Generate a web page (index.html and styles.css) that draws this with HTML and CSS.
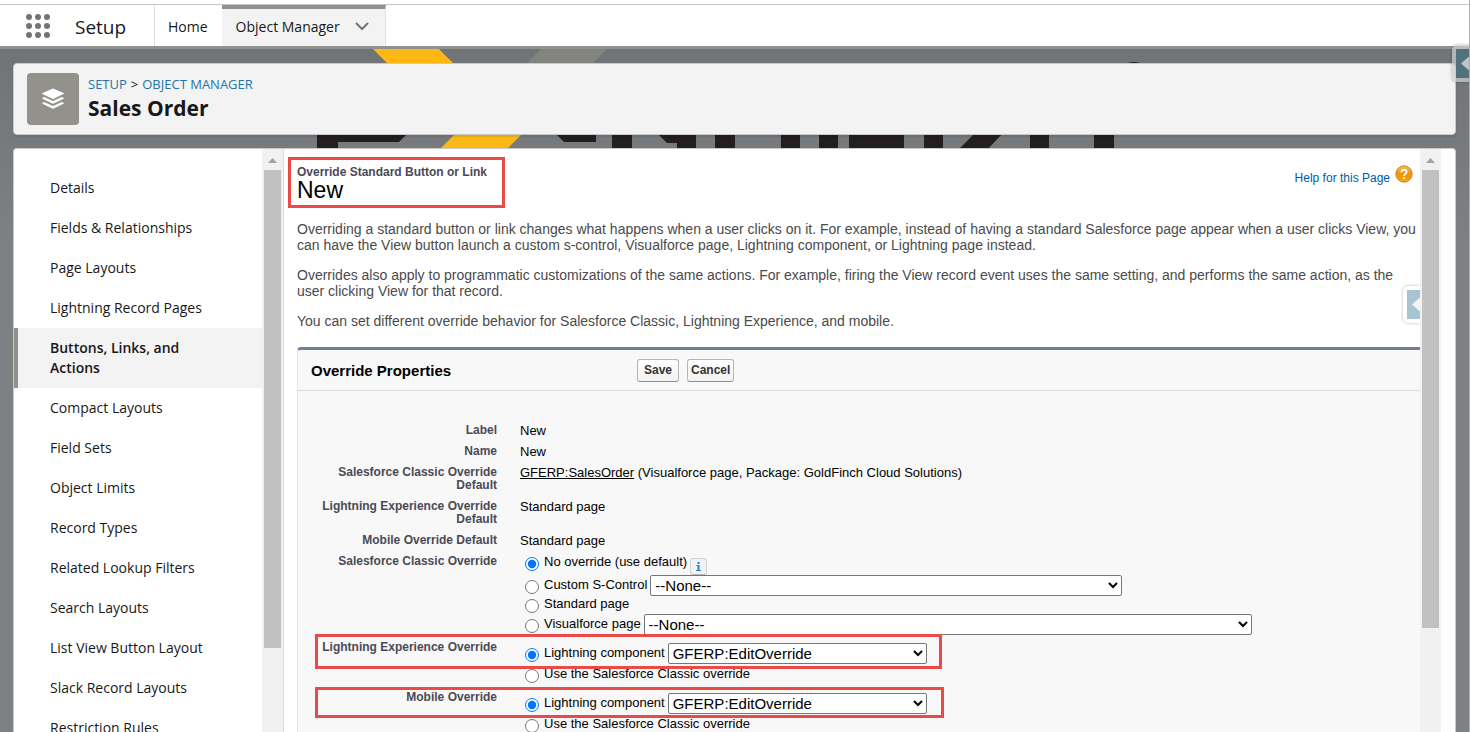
FILE: index.html
```html
<!DOCTYPE html>
<html lang="en">
<head>
<meta charset="utf-8">
<title>Sales Order | Object Manager</title>
<link rel="stylesheet" href="styles.css">
</head>
<body>
<div class="page">
  <header class="topbar">
    <button class="launcher" type="button" aria-label="App Launcher">
      <svg width="24" height="24" viewBox="0 0 24 24" fill="#747474"><circle cx="3" cy="3" r="3"/><circle cx="12" cy="3" r="3"/><circle cx="21" cy="3" r="3"/><circle cx="3" cy="12" r="3"/><circle cx="12" cy="12" r="3"/><circle cx="21" cy="12" r="3"/><circle cx="3" cy="21" r="3"/><circle cx="12" cy="21" r="3"/><circle cx="21" cy="21" r="3"/></svg>
    </button>
    <span class="app-name">Setup</span>
    <nav class="tabs">
      <a class="tab" href="#">Home</a>
      <a class="tab tab-active" href="#">Object Manager
        <svg width="14" height="9" viewBox="0 0 14 9" fill="none" stroke="#747474" stroke-width="2" stroke-linecap="round" stroke-linejoin="round"><path d="M1.500 1.500 7 7l5.500-5.500"/></svg>
      </a>
    </nav>
  </header>

  <div class="stage">
    <svg class="backdrop" width="1200" height="120" viewBox="0 49 1200 120" aria-hidden="true">
      <path fill="#fdb813" d="M373 49h66l15 15h-66zM454 135h67l-14 14h-67z"/>
      <path fill="#828480" d="M541 49h66l-14 14h-66z"/>
      <path fill="#231f20" d="M317 134h90l-8 8h-61v7h-21zM556 134h40v8h-32zM612 134h20v15h-20zM658 134h38v15h-19v-6h-10zM715 134h20v15h-20zM781 134h19v15h-19zM819 134h19v15h-19zM849 134h55v15h-55zM924 134h19v15h-19zM974 134h28l-14 15h-29zM1030 134h19v15h-19zM1094 134h20v15h-20z"/>
      <ellipse fill="#231f20" cx="1134" cy="69" rx="11" ry="7"/>
    </svg>

    <section class="card object-header">
      <div class="object-icon">
        <svg width="24" height="24" viewBox="0 0 24 24" fill="#fff"><path d="M11.300 1.700 1.500 6.100q-1 .5 0 1l9.800 4.700q.7.300 1.400 0l9.800-4.700q1-.5 0-1l-9.800-4.400q-.7-.3-1.400 0z"/><path d="m1.500 10.800 1.700-.8 7.500 3.600q1.300.6 2.600 0l7.500-3.600 1.700.8q1 .5 0 1l-9.800 4.700q-.7.300-1.400 0l-9.800-4.700q-1-.5 0-1z"/><path d="m1.500 15.800 1.700-.8 7.500 3.600q1.300.6 2.600 0l7.500-3.600 1.700.8q1 .5 0 1l-9.800 4.700q-.7.300-1.400 0l-9.800-4.700q-1-.5 0-1z"/></svg>
      </div>
      <div>
        <div class="crumbs"><a href="#">SETUP</a><span>&gt;</span><a href="#">OBJECT MANAGER</a></div>
        <h1>Sales Order</h1>
      </div>
    </section>

    <section class="card workspace">
      <nav class="sidebar">
        <a href="#">Details</a>
        <a href="#">Fields &amp; Relationships</a>
        <a href="#">Page Layouts</a>
        <a href="#">Lightning Record Pages</a>
        <a class="current" href="#">Buttons, Links, and Actions</a>
        <a href="#">Compact Layouts</a>
        <a href="#">Field Sets</a>
        <a href="#">Object Limits</a>
        <a href="#">Record Types</a>
        <a href="#">Related Lookup Filters</a>
        <a href="#">Search Layouts</a>
        <a href="#">List View Button Layout</a>
        <a href="#">Slack Record Layouts</a>
        <a href="#">Restriction Rules</a>
      </nav>
      <div class="scrollbar side-scroll"><span class="arrow"></span><span class="thumb"></span></div>

      <main class="content">
        <div class="title-row">
          <div class="title-box">
            <div class="eyebrow">Override Standard Button or Link</div>
            <h2>New</h2>
          </div>
          <a class="help" href="#">Help for this Page
            <svg width="18" height="18" viewBox="0 0 18 18"><defs><linearGradient id="amber" x1="0" y1="0" x2="0" y2="1"><stop offset="0" stop-color="#f7bd55"/><stop offset=".5" stop-color="#ee9209"/><stop offset="1" stop-color="#f5a80d"/></linearGradient></defs><circle cx="9" cy="9" r="8.200" fill="url(#amber)" stroke="#c98a2c"/><path d="M6.500 7.200C6.500 3.900 11.700 4 11.600 7c0 1.800-2.500 1.900-2.500 3.900" fill="none" stroke="#fff" stroke-width="1.800"/><circle cx="9.100" cy="13" r="1.100" fill="#fff"/></svg>
          </a>
        </div>

        <div class="intro">
          <p>Overriding a standard button or link changes what happens when a user clicks on it. For example, instead of having a standard Salesforce page appear when a user clicks View, you can have the View button launch a custom s-control, Visualforce page, Lightning component, or Lightning page instead.</p>
          <p>Overrides also apply to programmatic customizations of the same actions. For example, firing the View record event uses the same setting, and performs the same action, as the user clicking View for that record.</p>
          <p>You can set different override behavior for Salesforce Classic, Lightning Experience, and mobile.</p>
        </div>

        <form class="panel">
          <div class="panel-head">
            <h3>Override Properties</h3>
            <button type="button">Save</button>
            <button type="button">Cancel</button>
          </div>
          <div class="rows">
            <div class="row"><div class="name">Label</div><div class="value">New</div></div>
            <div class="row"><div class="name">Name</div><div class="value">New</div></div>
            <div class="row"><div class="name">Salesforce Classic Override Default</div><div class="value"><a href="#">GFERP:SalesOrder</a> (Visualforce page, Package: GoldFinch Cloud Solutions)</div></div>
            <div class="row"><div class="name">Lightning Experience Override Default</div><div class="value">Standard page</div></div>
            <div class="row"><div class="name">Mobile Override Default</div><div class="value">Standard page</div></div>
            <div class="row choice-row" role="radiogroup" aria-labelledby="g1">
              <div class="name" id="g1">Salesforce Classic Override</div>
              <div class="choices">
                <div class="choice tall"><input type="radio" name="classic" id="c1" checked><label for="c1">No override (use default)</label><button class="info" type="button" aria-label="Information"><svg width="5" height="9" viewBox="0 0 5 9" fill="#2a7fd4"><path d="M1.500 0h2v2h-2zM.5 3h3v5H5v1H0V8h1.500V4h-1z"/></svg></button></div>
                <div class="choice"><input type="radio" name="classic" id="c2"><label for="c2">Custom S-Control</label><select class="w-control" aria-label="Custom S-Control"><option>--None--</option></select></div>
                <div class="choice short"><input type="radio" name="classic" id="c3"><label for="c3">Standard page</label></div>
                <div class="choice"><input type="radio" name="classic" id="c4"><label for="c4">Visualforce page</label><select class="w-page" aria-label="Visualforce page"><option>--None--</option></select></div>
              </div>
            </div>
            <div class="row choice-row spaced" role="radiogroup" aria-labelledby="g2">
              <div class="name" id="g2">Lightning Experience Override</div>
              <div class="choices">
                <div class="choice"><input type="radio" name="lightning" id="l1" checked><label for="l1">Lightning component</label><select class="w-component" aria-label="Lightning component"><option>GFERP:EditOverride</option></select></div>
                <div class="choice"><input type="radio" name="lightning" id="l2"><label for="l2">Use the Salesforce Classic override</label></div>
              </div>
              <span class="mark mark-lightning"></span>
            </div>
            <div class="row choice-row spaced" role="radiogroup" aria-labelledby="g3">
              <div class="name" id="g3">Mobile Override</div>
              <div class="choices">
                <div class="choice"><input type="radio" name="mobile" id="m1" checked><label for="m1">Lightning component</label><select class="w-component" aria-label="Mobile Lightning component"><option>GFERP:EditOverride</option></select></div>
                <div class="choice"><input type="radio" name="mobile" id="m2"><label for="m2">Use the Salesforce Classic override</label></div>
              </div>
              <span class="mark mark-mobile"></span>
            </div>
          </div>
        </form>
        <button class="drawer drawer-inner" type="button" aria-label="Open panel"><span></span></button>
      </main>
      <div class="scrollbar main-scroll"><span class="arrow"></span><span class="thumb"></span></div>
    </section>
  </div>
  <button class="drawer drawer-outer" type="button" aria-label="Open sidebar"><span></span></button>
</div>
</body>
</html>
```
FILE: styles.css
```css
* { box-sizing: border-box; }

body {
  margin: 0;
  font-family: "Open Sans", "Noto Sans", sans-serif;
  font-size: 14px;
  color: #181818;
}

a { text-decoration: none; color: inherit; }
h1, h2, h3, p { margin: 0; }
button { font: inherit; padding: 0; cursor: pointer; }

.page {
  position: relative;
  display: flex;
  flex-direction: column;
  height: 100vh;
  overflow: hidden;
  border-right: 1px solid #a9abad;
}

/* Top navigation */
.topbar {
  display: flex;
  flex: none;
  height: 45px;
  margin-top: 4px;
  border-top: 1px solid #c4c4c4;
  border-bottom: 3px solid #93918c;
  background: #fff;
}
.launcher {
  display: flex;
  align-items: center;
  border: 0;
  background: none;
  padding: 0 25px 0 26px;
}
.app-name {
  width: 79px;
  font-size: 19px;
  line-height: 44px;
}
.tabs { display: flex; border-left: 1px solid #e0e0e0; }
.tab {
  display: flex;
  align-items: center;
  gap: 15px;
  padding: 2px 14px 0 13px;
  border-top: 0 solid #93918c;
}
.tab-active {
  padding: 0 16px 2px 14px;
  border-top-width: 4px;
  border-right: 1px solid #e0e0e0;
  background: #f3f3f3;
}

/* Page background and cards */
.stage {
  position: relative;
  display: flex;
  flex: 1;
  flex-direction: column;
  gap: 13px;
  min-height: 0;
  padding: 14px 13px 0;
  background: linear-gradient(#707477, #7d8183 200px);
}
.backdrop { position: absolute; top: 0; left: 0; }
.card {
  position: relative;
  border: 1px solid #c9c9c9;
  border-radius: 4px;
  background: #fff;
}
.object-header {
  display: flex;
  flex: none;
  gap: 9px;
  padding: 9px 13px;
  background: #f3f3f3;
  box-shadow: 0 2px 2px rgba(0, 0, 0, .1);
}
.object-icon {
  display: grid;
  place-items: center;
  width: 52px;
  height: 52px;
  border-radius: 4px;
  background: #93918c;
}
.crumbs {
  display: flex;
  gap: 4px;
  font-size: 13px;
  line-height: 22px;
}
.crumbs a { color: #2574a9; }
h1 { font-size: 21px; line-height: 26px; font-weight: 700; }

.workspace {
  display: flex;
  flex: 1;
  min-height: 0;
  padding-right: 14px;
  border-bottom: 0;
  border-radius: 4px 4px 0 0;
  overflow: hidden;
}

/* Object sidebar */
.sidebar {
  flex: none;
  width: 248px;
  padding-top: 19px;
  overflow: hidden;
}
.sidebar a {
  display: block;
  padding: 10px 36px;
  line-height: 20px;
}
.sidebar .current {
  padding-left: 32px;
  border-left: 4px solid #93918c;
  background: #f3f3f3;
  font-weight: 600;
}

/* Scrollbars */
.scrollbar {
  display: flex;
  flex: none;
  flex-direction: column;
  width: 21px;
  padding: 0 2px;
  background: #f1f1f1;
}
.arrow {
  width: 9px;
  height: 5px;
  margin: 9px 4px 7px;
  background: #a3a3a3;
  clip-path: polygon(50% 0, 100% 100%, 0 100%);
}
.thumb { width: 17px; background: #c1c1c1; }
.side-scroll { border-right: 1px solid #dcdcdc; width: 22px; }
.side-scroll .thumb { height: 82%; }
.main-scroll .thumb { height: 78.600%; }

/* Setup page */
.content {
  position: relative;
  flex: 1;
  min-width: 0;
  padding: 8px 0 0 4px;
  overflow: hidden;
  font-family: "Liberation Sans", Arial, sans-serif;
  font-size: 12px;
}
.title-row { display: flex; justify-content: space-between; align-items: flex-start; }
.title-box {
  width: 217px;
  height: 51px;
  padding: 6px 6px;
  border: 3px solid #ea4b46;
}
.eyebrow { line-height: 13px; font-weight: 700; color: #4a4a56; white-space: nowrap; }
h2 { font-size: 23px; line-height: 22px; font-weight: 400; color: #000; }
.help {
  display: flex;
  gap: 5px;
  padding: 8px 7px 0 0;
  line-height: 26px;
  color: #015ba7;
}
.intro {
  display: grid;
  gap: 14px;
  margin: 13px 0 0 9px;
  font-size: 14px;
  line-height: 16px;
  color: #4a4a4a;
}

.panel {
  margin: 18px 0 0 9px;
  border-top: 3px solid #747e96;
  border-left: 1px solid #e5e5e5;
  border-radius: 4px 0 0 0;
  background: #f8f8f8;
}
.panel-head {
  display: flex;
  align-items: center;
  gap: 8px;
  height: 41px;
  padding-left: 13px;
  border-bottom: 1px solid #dcdcdc;
}
h3 { width: 318px; font-size: 15px; color: #000; }
.panel-head button {
  height: 23px;
  padding: 0 3px;
  min-width: 42px;
  border: 1px solid #b5b5b5;
  border-bottom-color: #8f8f8f;
  border-radius: 3px;
  background: linear-gradient(#fff, #f1f1f1);
  font-weight: 700;
  color: #333;
}

.rows { padding-top: 29px; color: #000; }
.row {
  position: relative;
  display: grid;
  grid-template-columns: 178px 1fr;
  column-gap: 23px;
  padding-left: 21px;
  line-height: 13px;
}
.name { padding: 4px 0; text-align: right; font-weight: 700; color: #4a4a56; }
.value { padding: 4px 0; font-size: 13px; }
.value a { text-decoration: underline; }
.choices { padding: 0 0 2px 5px; }
.spaced .choices { padding-top: 6px; }
.choice { display: flex; height: 21px; align-items: center; font-size: 13px; }
.choice.tall { height: 24px; }
.choice.short { height: 18px; }
.choice input { width: 14px; height: 14px; margin: 2px 5px 0 0; }
.choice label { margin: 0 3px 3px 0; }
.choice select {
  height: 21px;
  border: 1px solid #767676;
  border-radius: 2px;
  background-color: #fff;
  font: 15px "Liberation Sans", Arial, sans-serif;
  color: #000;
}
.w-control { width: 472px; }
.w-page { width: 608px; }
.w-component { width: 259px; }
.info {
  display: grid;
  place-items: center;
  width: 17px;
  height: 17px;
  margin-top: 6px;
  border: 1px solid #d2d2d2;
  border-bottom-color: #b9b9b9;
  border-radius: 3px;
  background: #f1f3f8;
}

/* Annotation frames drawn over the form */
.mark {
  position: absolute;
  left: 17px;
  border: 3px solid #ea4b46;
  pointer-events: none;
}
.mark-lightning { top: -3px; width: 627px; height: 35px; }
.mark-mobile { top: 0; width: 629px; height: 31px; }

/* Pull-out drawer handles */
.drawer {
  position: absolute;
  right: 0;
  width: 17px;
  height: 37px;
  padding: 4px 0 4px 4px;
  border: 0;
  border-radius: 5px 0 0 5px;
  background: #fff;
  box-shadow: 0 0 3px rgba(0, 0, 0, .3);
}
.drawer span {
  display: flex;
  align-items: center;
  justify-content: flex-end;
  height: 29px;
  background: #a8c4d0;
}
.drawer span::after {
  content: "";
  width: 8px;
  height: 14px;
  background: #f3f3f3;
  clip-path: polygon(0 50%, 100% 0, 100% 100%);
}
.drawer-inner { top: 137px; }
.drawer-outer { top: 45px; background: rgba(205, 207, 208, .7); }
.drawer-outer span { background: #50727f; }
.drawer-outer span::after { background: #c0c4c6; }
```
